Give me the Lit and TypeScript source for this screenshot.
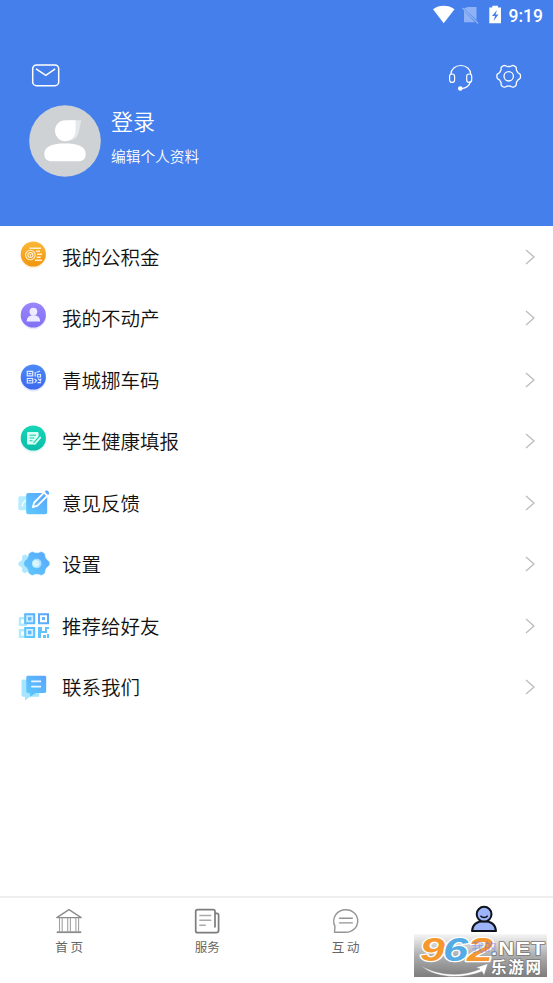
import { LitElement, html, css, svg } from 'lit';
import { customElement, property } from 'lit/decorators.js';

// Toothed ring outline, used by the settings icons
const gearPath = (cx: number, cy: number, r: number, depth: number, teeth: number) => {
  const points: string[] = [];
  for (let i = 0; i < 96; i++) {
    const a = (i / 96) * Math.PI * 2;
    const wave = Math.max(-1, Math.min(1, Math.cos(a * teeth) * 1.5));
    const d = r + depth * wave;
    points.push(`${(cx + d * Math.cos(a)).toFixed(2)} ${(cy + d * Math.sin(a)).toFixed(2)}`);
  }
  return `M${points.join('L')}Z`;
};

const disc = (from: string, to: string, id: string) => svg`
  <defs>
    <linearGradient id=${id} x1="0" y1="0" x2="0" y2="1">
      <stop offset="0" stop-color=${from} />
      <stop offset="1" stop-color=${to} />
    </linearGradient>
  </defs>
  <circle cx="15.3" cy="14.8" r="12.6" fill=${to} opacity="0.15" />
  <circle cx="15.3" cy="13" r="12.6" fill="url(#${id})" />
`;

const blueGradient = svg`
  <defs>
    <linearGradient id="blue" x1="1" y1="0" x2="0" y2="1">
      <stop offset="0" stop-color="#5aa4fc" />
      <stop offset="1" stop-color="#5dcbfd" />
    </linearGradient>
  </defs>
`;

const menuIcons: Record<string, unknown> = {
  fund: svg`
    ${disc('#fbb836', '#f1950f', 'g')}
    <g fill="none" stroke="#fff0cf">
      <circle cx="12.4" cy="14" r="4.8" stroke-width="1.1" />
      <circle cx="12.4" cy="14" r="2.5" stroke-width="1.1" />
      <path d="M11.3 12.7l1.1 1.4 1.1-1.4M12.4 14v2" stroke-width="0.8" />
      <path d="M11.5 7.3H23M18 10.3h4M19 13.3h5M18.6 16.3h4M17 19.2h7" stroke-width="1.4" />
    </g>`,
  estate: svg`
    ${disc('#9a86fb', '#8070f3', 'g')}
    <g fill="#eeeaff">
      <circle cx="15.4" cy="9.6" r="3.9" />
      <path d="M8.7 19.4c0-4 2.5-6.2 6.7-6.2s6.7 2.2 6.7 6.2z" />
    </g>`,
  code: svg`
    ${disc('#4b8bf7', '#3c68ed', 'g')}
    <g fill="none" stroke="#e2eaff" stroke-width="1.2">
      <path d="M9.3 7.4h5.4v4.5H9.3zM9.3 14.5h5.4V19H9.3zM10.5 9.6h3M10.5 16.7h3" />
      <path d="M17.2 8v4.5M18.5 8.5l3.5-1.5M19.5 10.5h3V13h-3zM16.5 15l2 1.5-2 2.5M20 14.7l2.5 2 .5-2M19.5 18.6H23" />
    </g>`,
  health: svg`
    ${disc('#16d7b6', '#09bda9', 'g')}
    <path d="M10.3 7h9c.7 0 1.3.6 1.3 1.3v4.5l-4.8 6.7h-5.5c-.7 0-1.3-.6-1.3-1.3V8.3c0-.7.6-1.3 1.3-1.3z" fill="#dbfff5" />
    <path d="M11.5 10.2h6.5M11.5 13h5M11.5 15.8h3" stroke="#12cbb0" stroke-width="1" />
    <path d="M16.5 18.7l5.5-6.2" stroke="#12cbb0" stroke-width="3.6" />
    <path d="M16.7 18.8l5.5-6.2" stroke="#dbfff5" stroke-width="1.9" stroke-linecap="round" />`,
  feedback: svg`
    ${blueGradient}
    <rect x="0.4" y="9.3" width="12" height="14" rx="1.5" fill="#b5ecfe" />
    <path d="M4 19.5l1-3.5 3-3" stroke="#fff" stroke-width="1.2" fill="none" />
    <rect x="8.2" y="6" width="21" height="21.2" rx="2" fill="url(#blue)" />
    <path d="M14.8 20.2l1.4-4.7L26 5.6l3.3 3.3-9.8 9.8z" fill="none" stroke="#fff" stroke-width="1.8" stroke-linejoin="round" />
    <path d="M26.7 4.6l1-.9c1.8-.8 4.1 1.5 3.3 3.3l-.9 1z" fill="#5aa6fb" />`,
  settings: svg`
    ${blueGradient}
    <path d=${gearPath(10.5, 15.8, 9, 1.1, 6)} fill="#b0e9fd" />
    <path d=${gearPath(18.8, 15.5, 11.4, 1, 6)} fill="url(#blue)" stroke="#5cb8fc" stroke-width="0.6" stroke-linejoin="round" />
    <circle cx="18.7" cy="15.5" r="4.8" fill="#a6e3fe" />
    <circle cx="17.9" cy="15.5" r="3.5" fill="#d9f5ff" />`,
  share: svg`
    ${blueGradient}
    <g fill="#b3e9fd">
      <path d="M0.8 7h8v9h-8zM0.8 19h8v9h-8z" />
      <path d="M3 9.4h3v4H3zM3 21.4h3v4H3z" fill="#fff" />
    </g>
    <path d="M6.3 3.3h10.8v10.8H6.3zM6.3 17.1h10.8v10.8H6.3z" fill="#cdefff" />
    <g fill="none" stroke="url(#blue)" stroke-width="2">
      <path d="M7.2 4.2h9v9h-9zM21 4.2h9v9h-9zM7.2 18h9v9h-9z" />
    </g>
    <path d="M10 7h3.4v3.4H10zM10 20.8h3.4v3.4H10z" fill="#63b8fc" />
    <path d="M24 7h3v3h-3z" fill="#67b4fb" />
    <path d="M20 17h4v4h3v-4h4v2h-2v4h-6v5h-3zM25 25h3v3h-3zM29 24h2v4h-2z" fill="#63c3fc" />`,
  contact: svg`
    ${blueGradient}
    <path d="M5.2 8.5h16v17.3H12l-5 3.6v-3.6H5.2c-1 0-1.7-.7-1.7-1.7V10.2c0-1 .7-1.7 1.7-1.7z" fill="#a5e5fe" />
    <path d="M9.9 4.7h16.7c1 0 1.6.7 1.6 1.6v13.9c0 1-.6 1.7-1.6 1.7H18l-6 3.8-.4-3.8H9.9c-1 0-1.6-.7-1.6-1.7V6.3c0-1 .6-1.6 1.6-1.6z" fill="url(#blue)" />
    <path d="M13.2 10.4H23M13.2 15.6H23" stroke="#e9f8ff" stroke-width="1.7" />`,
};

const tabIcons: Record<string, unknown> = {
  home: svg`
    <g fill="none" stroke="#8b8b8b" stroke-width="1.3">
      <path d="M3.8 12.6L16 4.6l12.2 8z" stroke-linejoin="round" />
      <path d="M3.7 27.2h24.6" stroke-width="1.8" />
      <path d="M6.5 13v14M9.2 13v14M14.7 13v14M17.4 13v14M22.9 13v14M25.6 13v14" stroke-width="1.1" stroke="#a3a3a3" />
    </g>`,
  service: svg`
    <g fill="none" stroke="#7d7d7d" stroke-width="1.7">
      <path d="M24 22.500V6.700c0-1.200-.8-2-2-2H6.700c-1.200 0-2 .8-2 2v19c0 1.200.8 2 2 2h18.500c1.500 0 2.400-.9 2.400-2.400V10c0-1-.8-1.700-1.800-1.700H24" />
      <path d="M8.3 10.500h12M8.3 15.300h12M8.3 20.200h6.5" stroke="#a9a9a9" stroke-width="1.4" />
    </g>`,
  chat: svg`
    <g fill="none" stroke="#949494" stroke-width="1.4" stroke-linejoin="round">
      <path d="M4.500 27.200l.5-5.500C1 13 7 4.700 15.800 4.700c6.700 0 11.900 5 11.900 11.200 0 6.300-5.200 11.300-11.900 11.300z" />
      <path d="M9.500 13.200h12.800M9.500 17.900h12.800" stroke-linecap="round" />
    </g>`,
  mine: svg`
    <g fill="#9db4fa" stroke="#10131c" stroke-width="2">
      <path d="M4 26c.5-6.500 5-9.800 12-9.800s11.500 3.300 12 9.800z" stroke-linejoin="round" />
      <circle cx="16.1" cy="9.2" r="7.4" />
      <path d="M12.500 10.700c1.900 2.400 5.300 2.400 7.200 0" fill="none" stroke-width="1.5" />
    </g>`,
};

@customElement('status-bar')
export class StatusBar extends LitElement {
  @property({ type: String })
  time = '';

  static styles = css`
    :host {
      display: flex;
      justify-content: flex-end;
      height: 31px;
      padding-right: 10px;
      box-sizing: border-box;
      color: #fff;
      font: 500 17.5px/32px Roboto, sans-serif;
    }

    svg {
      display: block;
      width: 76px;
      height: 31px;
    }
  `;

  render() {
    return html`
      <svg viewBox="0 0 76 31">
        <path d="M0 9.3C6 4.7 15.5 4.7 21.5 9.3L10.7 23.3z" fill="#fff" />
        <path d="M34.5 7H43.5V20L31 8.5zM31 10.5L42 22.3H31z" fill="#8eb2f5" />
        <path d="M29.5 8L45.2 23.5" stroke="#8eb2f5" stroke-width="1.3" />
        <path d="M56.3 7.5h3V5.7h5.7v1.8h3v15.8H56.3z" fill="#fff" />
        <path d="M64 10l-5 6h3l-1.5 5 5-6.5h-3z" fill="#447feb" />
      </svg>
      <span>${this.time}</span>
    `;
  }
}

@customElement('menu-row')
export class MenuRow extends LitElement {
  @property({ type: String })
  icon = '';

  @property({ type: String })
  label = '';

  static styles = css`
    :host {
      display: flex;
      align-items: center;
      height: 61.5px;
      padding: 0 17px 0 18px;
      box-sizing: border-box;
    }

    .icon {
      width: 32px;
      height: 32px;
      margin-right: 12px;
    }

    .label {
      flex: 1;
      font-size: 19.5px;
      font-weight: 350;
      line-height: 28px;
      color: #111;
    }

    .chevron {
      width: 12px;
      height: 18px;
    }
  `;

  render() {
    return html`
      <svg class="icon" viewBox="0 0 32 32">${menuIcons[this.icon]}</svg>
      <span class="label">${this.label}</span>
      <svg class="chevron" viewBox="0 0 12 18">
        <path d="M2 2l8 7-8 7" fill="none" stroke="#bcbcbc" stroke-width="1.3" />
      </svg>
    `;
  }
}

@customElement('site-mark')
export class SiteMark extends LitElement {
  static styles = css`
    :host {
      display: block;
      width: 133px;
      height: 43px;
      background: linear-gradient(rgba(225, 225, 225, 0.3), rgba(165, 165, 165, 0.9) 50%, #7d7d7d);
    }

    svg {
      display: block;
      overflow: visible;
    }

    text {
      paint-order: stroke;
      stroke-linejoin: round;
    }

    .digits {
      font: italic 700 34px 'Liberation Sans', sans-serif;
      stroke: #fff;
      stroke-width: 2.5px;
    }

    .orange {
      fill: #f7982f;
    }

    .blue {
      fill: #55ace4;
    }

    .net {
      font: 700 18.5px 'Liberation Sans', sans-serif;
      letter-spacing: 1px;
      fill: #fff;
      stroke: #777;
      stroke-width: 1.6px;
    }

    .name {
      font: 700 15.5px 'Noto Sans CJK SC', sans-serif;
      fill: #fff;
      stroke: #777;
      stroke-width: 1.5px;
    }
  `;

  render() {
    return html`
      <svg width="133" height="43" viewBox="0 0 133 43">
        <path d="M6 31c18 11 42 12 60 4l-4-1.5 12-4-4 12-2-4c-21 8-47 7-62-6.5z" fill="#fff" stroke="#888" stroke-width="0.5" />
        <text class="digits orange" x="6" y="27" textLength="25" lengthAdjust="spacingAndGlyphs">9</text>
        <text class="digits blue" x="29" y="27" textLength="25" lengthAdjust="spacingAndGlyphs">6</text>
        <text class="digits orange" x="53" y="27" textLength="26" lengthAdjust="spacingAndGlyphs">2</text>
        <text class="net" x="77" y="21" textLength="55" lengthAdjust="spacingAndGlyphs">.NET</text>
        <text class="name" x="77" y="39" textLength="50">乐游网</text>
      </svg>
    `;
  }
}

@customElement('app-root')
export class AppRoot extends LitElement {
  static styles = css`
    :host {
      display: flex;
      flex-direction: column;
      position: relative;
      height: 983px;
      overflow: hidden;
      background: #fff;
      font-family: 'Noto Sans CJK SC', sans-serif;
    }

    .header {
      height: 226px;
      background: #447feb;
      color: #fff;
    }

    .actions {
      display: flex;
      align-items: center;
      height: 36px;
      margin-top: 27px;
      padding: 0 28px 0 30px;
      gap: 16px;
    }

    .actions svg {
      width: 32px;
      height: 32px;
      fill: none;
      stroke: #fff;
    }

    .spacer {
      flex: 1;
    }

    .profile {
      display: flex;
      margin: 11px 0 0 29px;
      gap: 10px;
    }

    .avatar {
      width: 72px;
      height: 72px;
    }

    .login {
      font-size: 22px;
      line-height: 30px;
    }

    .edit {
      margin-top: 10px;
      font-size: 14.7px;
      line-height: 22px;
    }

    .login,
    .edit {
      font-weight: 350;
    }

    .menu {
      flex: 1;
    }

    .tabs {
      display: flex;
      height: 87px;
      box-sizing: border-box;
      border-top: 2px solid #eeeeee;
    }

    .tab {
      flex: 1;
      display: flex;
      flex-direction: column;
      align-items: center;
      padding-top: 7px;
      font-size: 12.5px;
      line-height: 18px;
      color: #666;
    }

    .tab svg {
      width: 32px;
      height: 32px;
      margin-bottom: 1px;
    }

    /* The active label shows through the site mark */
    .tab.active span {
      position: relative;
      z-index: 1;
      color: #4c7cf0;
      opacity: 0.5;
    }

    site-mark {
      position: absolute;
      right: 6px;
      bottom: 6px;
    }
  `;

  private rows = [
    { icon: 'fund', label: '我的公积金' },
    { icon: 'estate', label: '我的不动产' },
    { icon: 'code', label: '青城挪车码' },
    { icon: 'health', label: '学生健康填报' },
    { icon: 'feedback', label: '意见反馈' },
    { icon: 'settings', label: '设置' },
    { icon: 'share', label: '推荐给好友' },
    { icon: 'contact', label: '联系我们' },
  ];

  private tabs = [
    { icon: 'home', label: '首 页' },
    { icon: 'service', label: '服务' },
    { icon: 'chat', label: '互 动' },
    { icon: 'mine', label: '我的', active: true },
  ];

  render() {
    return html`
      <div class="header">
        <status-bar time="9:19"></status-bar>
        <div class="actions">
          <svg viewBox="0 0 32 32">
            <rect x="2.7" y="4.9" width="26" height="20.8" rx="3.8" stroke-width="1.5" />
            <path d="M6 8.9l9.8 6.5 9.4-6.5" stroke-width="1.5" />
          </svg>
          <span class="spacer"></span>
          <svg viewBox="0 0 32 32" stroke-width="1.2">
            <path d="M5.8 14.5C6 9 10.2 5.5 15.8 5.5s9.8 3.5 10 9" />
            <rect x="4.6" y="14" width="5" height="8.4" rx="2.3" />
            <rect x="21.7" y="14" width="5" height="8.4" rx="2.3" />
            <path d="M25.6 21c-1.2 5-4 7.2-9 7.7" />
            <circle cx="15.3" cy="28.5" r="1.7" fill="#fff" />
          </svg>
          <svg viewBox="0 0 32 32" stroke-width="1.3">
            <path d=${gearPath(15.7, 16.3, 10.8, 1, 6)} />
            <circle cx="15.7" cy="16.3" r="4.7" />
          </svg>
        </div>
        <div class="profile">
          <svg class="avatar" viewBox="0 0 72 72">
            <circle cx="36" cy="36" r="35.8" fill="#ced2d5" />
            <path d="M40 15.3h12.3L50 26c-1 6-5 9.5-10 9.5z" fill="#e5e8ea" />
            <path d="M36.5 15.3H46.5V26c0 6-4.5 10.2-10.2 10.2S26 31.5 26 25.7s4.500-10.4 10.5-10.4z" fill="#fff" />
            <path d="M36 38.5c12 0 20.7 2.5 20.7 10.5 0 5-2.7 7.3-7.7 7.3H23c-5 0-7.7-2.3-7.7-7.3 0-8 8.7-10.5 20.7-10.5z" fill="#fff" />
          </svg>
          <div>
            <div class="login">登录</div>
            <div class="edit">编辑个人资料</div>
          </div>
        </div>
      </div>
      <div class="menu">
        ${this.rows.map((row) => html`<menu-row icon=${row.icon} label=${row.label}></menu-row>`)}
      </div>
      <div class="tabs">
        ${this.tabs.map(
          (tab) => html`
            <div class="tab ${tab.active ? 'active' : ''}">
              <svg viewBox="0 0 32 32">${tabIcons[tab.icon]}</svg>
              <span>${tab.label}</span>
            </div>
          `
        )}
      </div>
      <site-mark></site-mark>
    `;
  }
}
